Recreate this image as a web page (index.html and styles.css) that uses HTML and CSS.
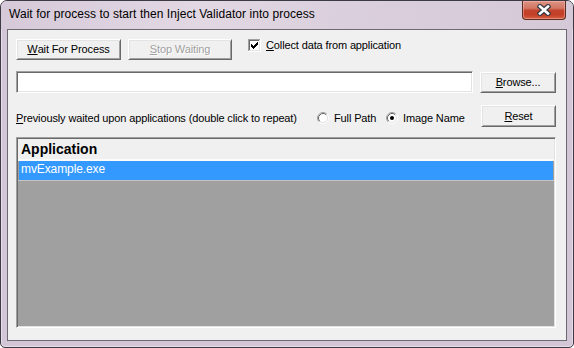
FILE: index.html
```html
<!DOCTYPE html>
<html>
<head>
<meta charset="utf-8">
<title>Inject Validator</title>
<link rel="stylesheet" href="styles.css">
</head>
<body>
<div class="window">
  <div class="titlebar">
    <span class="title">Wait for process to start then Inject Validator into process</span>
    <div class="close">
      <svg width="14" height="12" viewBox="0 0 14 12">
        <path d="M3 2.5 L11 9.5 M11 2.5 L3 9.5" stroke="#3b3b46" stroke-width="5" stroke-linecap="square" fill="none"/>
        <path d="M3 2.5 L11 9.5 M11 2.5 L3 9.5" stroke="#ffffff" stroke-width="2.6" stroke-linecap="square" fill="none"/>
      </svg>
    </div>
  </div>
  <div class="client">
    <div class="row row-top">
      <button class="btn btn-wait"><u>W</u>ait For Process</button>
      <button class="btn btn-stop is-disabled"><u>S</u>top Waiting</button>
      <label class="check">
        <svg class="checkbox" width="13" height="13" viewBox="0 0 13 13" shape-rendering="crispEdges">
          <rect x="0" y="0" width="13" height="13" fill="#ffffff"/>
          <rect x="0" y="0" width="12" height="1" fill="#a0a0a0"/>
          <rect x="0" y="0" width="1" height="12" fill="#a0a0a0"/>
          <rect x="1" y="1" width="10" height="1" fill="#696969"/>
          <rect x="1" y="1" width="1" height="10" fill="#696969"/>
          <rect x="1" y="11" width="11" height="1" fill="#e3e3e3"/>
          <rect x="11" y="1" width="1" height="11" fill="#e3e3e3"/>
          <path d="M9 3h1v1h-1z M8 4h2v1h-2z M3 5h1v1h-1z M7 5h3v1h-3z M3 6h2v1h-2z M6 6h3v1h-3z M3 7h5v1h-5z M4 8h3v1h-3z M5 9h1v1h-1z" fill="#000000"/>
        </svg>
        <span class="check-text"><u>C</u>ollect data from application</span>
      </label>
    </div>
    <div class="row row-path">
      <div class="textbox"></div>
      <button class="btn btn-browse"><u>B</u>rowse...</button>
    </div>
    <div class="row row-history">
      <span class="prev-label"><u>P</u>reviously waited upon applications (double click to repeat)</span>
      <label class="radio radio-full">
        <svg width="12" height="12" viewBox="0 0 12 12">
          <circle cx="6" cy="6" r="4.2" fill="#ffffff"/>
          <path d="M2.11 9.89 A5.5 5.5 0 0 1 9.89 2.11" stroke="#a0a0a0" fill="none"/>
          <path d="M9.89 2.11 A5.5 5.5 0 0 1 2.11 9.89" stroke="#ffffff" fill="none"/>
          <path d="M2.82 9.18 A4.5 4.5 0 0 1 9.18 2.82" stroke="#696969" fill="none"/>
          <path d="M9.18 2.82 A4.5 4.5 0 0 1 2.82 9.18" stroke="#e3e3e3" fill="none"/>
        </svg>
        <span>Full Path</span>
      </label>
      <label class="radio radio-image">
        <svg width="12" height="12" viewBox="0 0 12 12">
          <circle cx="6" cy="6" r="4.2" fill="#ffffff"/>
          <path d="M2.11 9.89 A5.5 5.5 0 0 1 9.89 2.11" stroke="#a0a0a0" fill="none"/>
          <path d="M9.89 2.11 A5.5 5.5 0 0 1 2.11 9.89" stroke="#ffffff" fill="none"/>
          <path d="M2.82 9.18 A4.5 4.5 0 0 1 9.18 2.82" stroke="#696969" fill="none"/>
          <path d="M9.18 2.82 A4.5 4.5 0 0 1 2.82 9.18" stroke="#e3e3e3" fill="none"/>
          <circle cx="6" cy="6" r="2" fill="#000000"/>
        </svg>
        <span>Image Name</span>
      </label>
      <button class="btn btn-reset"><u>R</u>eset</button>
    </div>
    <div class="list">
      <div class="list-header">Application</div>
      <div class="list-row is-selected">mvExample.exe</div>
      <div class="list-empty"></div>
    </div>
  </div>
</div>
</body>
</html>
```

FILE: styles.css
```css
* {
  box-sizing: border-box;
}

html, body {
  margin: 0;
  padding: 0;
  background: #ffffff;
}

body {
  width: 574px;
  height: 348px;
  overflow: hidden;
  font-family: "Liberation Sans", Arial, sans-serif;
  font-size: 11px;
  letter-spacing: -0.13px;
  color: #000000;
}

.window {
  width: 574px;
  height: 348px;
  border: 1px solid #3e3a44;
  border-radius: 7px 7px 5px 5px;
  background: #d3c6d6;
  display: flex;
  flex-direction: column;
  box-shadow: inset 0 0 0 1px #e6dde8;
  overflow: hidden;
}

.titlebar {
  height: 28px;
  flex: 0 0 28px;
  display: flex;
  align-items: flex-start;
  background: linear-gradient(100deg, #d6c9d9 0%, #e2d8e3 35%, #dacfdc 60%, #d5c9d8 100%);
}

.title {
  padding: 6px 0 0 8px;
  font-size: 12px;
  line-height: 15px;
  letter-spacing: 0.05px;
  color: #000000;
  white-space: nowrap;
}

.close {
  margin-left: auto;
  margin-right: 7px;
  width: 44px;
  height: 19px;
  border: 1px solid #5e2a22;
  border-top: none;
  border-radius: 0 0 4px 4px;
  background: linear-gradient(#dd9384 0%, #d27763 40%, #c4442c 52%, #c33d27 75%, #d3603f 100%);
  box-shadow: inset 0 0 0 1px rgba(255, 200, 190, 0.45);
  display: flex;
  align-items: center;
  justify-content: center;
}

.close svg {
  display: block;
}

.client {
  flex: 1;
  margin: 0 6px 6px 6px;
  border: 1px solid #6c6a70;
  background: #f0f0f0;
  padding: 9px 10px 12px 8px;
  display: flex;
  flex-direction: column;
}

.row {
  display: flex;
  align-items: center;
}

.row-top {
  height: 21px;
  margin-bottom: 11px;
  align-items: flex-start;
}

.row-path {
  height: 22px;
  margin-bottom: 12px;
}

.row-history {
  height: 22px;
  margin-bottom: 10px;
}

.btn {
  font-family: "Liberation Sans", Arial, sans-serif;
  font-size: 11px;
  letter-spacing: -0.13px;
  color: #000000;
  background: #f0f0f0;
  border-top: 1px solid #ffffff;
  border-left: 1px solid #ffffff;
  border-right: 1px solid #696969;
  border-bottom: 1px solid #696969;
  box-shadow: inset 1px 1px 0 #e3e3e3, inset -1px -1px 0 #a0a0a0;
  padding: 0;
  margin: 0;
  height: 21px;
  display: flex;
  align-items: center;
  justify-content: center;
  line-height: 13px;
}

.btn-wait {
  width: 105px;
  margin-right: 7px;
}

.btn-stop {
  width: 104px;
}

.is-disabled {
  color: #a0a0a0;
  text-shadow: 1px 1px 0 #ffffff;
}

.check {
  margin-left: 16px;
  height: 13px;
  display: flex;
  align-items: center;
}

.checkbox {
  display: block;
  flex: 0 0 13px;
}

.check-text {
  margin-left: 5px;
  line-height: 13px;
}

.textbox {
  width: 457px;
  height: 22px;
  margin-right: 7px;
  background: #ffffff;
  border-top: 1px solid #a0a0a0;
  border-left: 1px solid #a0a0a0;
  border-right: 1px solid #ffffff;
  border-bottom: 1px solid #ffffff;
  box-shadow: inset 1px 1px 0 #696969, inset -1px -1px 0 #e3e3e3;
}

.btn-browse {
  width: 76px;
  height: 21px;
}

.prev-label {
  flex: 0 0 301px;
  padding-top: 4px;
  white-space: nowrap;
  line-height: 13px;
}

.radio {
  display: flex;
  align-items: center;
  padding-top: 4px;
  line-height: 13px;
  white-space: nowrap;
}

.radio svg {
  display: block;
  flex: 0 0 12px;
  margin-right: 5px;
}

.radio-full {
  width: 69px;
}

.btn-reset {
  margin-left: auto;
  width: 75px;
  height: 22px;
}

.list {
  flex: 1;
  display: flex;
  flex-direction: column;
  background: #a0a0a0;
  border-top: 1px solid #a0a0a0;
  border-left: 1px solid #a0a0a0;
  border-right: 1px solid #ffffff;
  border-bottom: 1px solid #ffffff;
  box-shadow: inset 1px 1px 0 #696969, inset -1px -1px 0 #e3e3e3;
  padding: 1px;
}

.list-header {
  height: 22px;
  flex: 0 0 22px;
  background: #f0f0f0;
  border-bottom: 2px solid #fbfbfb;
  padding-left: 3px;
  font-size: 14px;
  font-weight: bold;
  letter-spacing: 0;
  line-height: 20px;
}

.list-row {
  height: 19px;
  flex: 0 0 19px;
  margin: 0 1px;
  padding-left: 2px;
  font-size: 12px;
  letter-spacing: -0.1px;
  line-height: 17px;
  color: #000000;
}

.list-row.is-selected {
  background: #3399ff;
  color: #ffffff;
}

.list-empty {
  flex: 1;
  border-top: 1px solid #c4c4c4;
  background: #a0a0a0;
}
```
